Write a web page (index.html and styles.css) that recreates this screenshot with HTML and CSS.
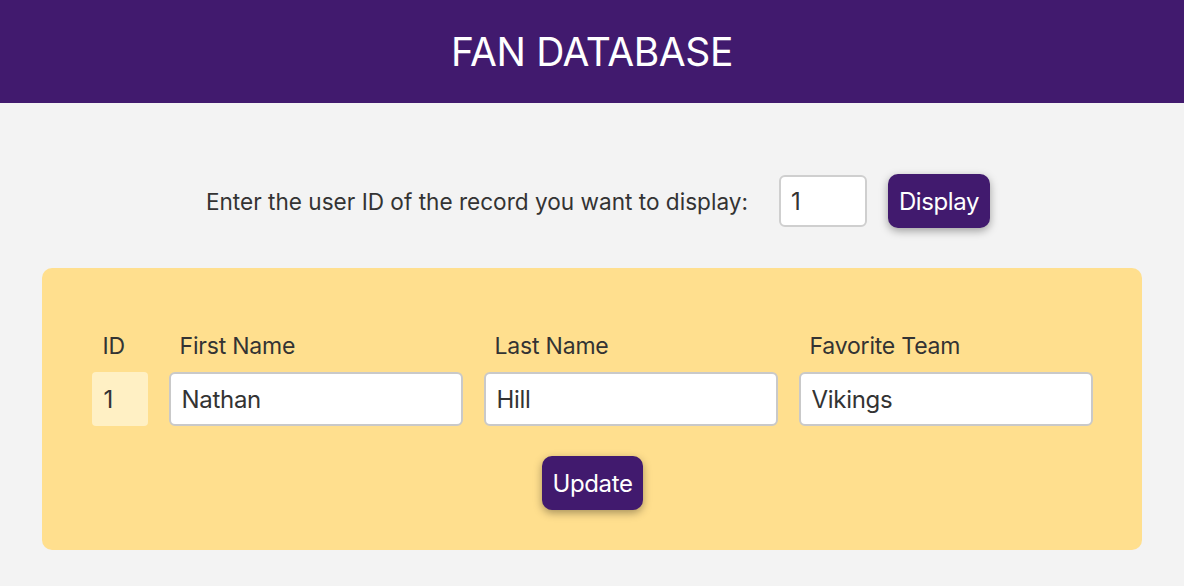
FILE: index.html
```html
<!DOCTYPE html>
<html>
<head>
<meta charset="utf-8">
<link rel="stylesheet" href="styles.css">
</head>
<body>
<header class="top">
  <h1 class="title">FAN DATABASE</h1>
</header>
<main class="main">
  <div class="lookup">
    <label class="lookup-label" for="uid">Enter the user ID of the record you want to display:</label>
    <input id="uid" class="lookup-input" type="text" value="1">
    <button class="btn">Display</button>
  </div>
  <section class="panel">
    <div class="grid">
      <div class="lbl">ID</div>
      <div class="lbl">First Name</div>
      <div class="lbl">Last Name</div>
      <div class="lbl">Favorite Team</div>
      <div class="idbox">1</div>
      <input class="field" type="text" value="Nathan">
      <input class="field" type="text" value="Hill">
      <input class="field" type="text" value="Vikings">
    </div>
    <div class="actions">
      <button class="btn">Update</button>
    </div>
  </section>
</main>
</body>
</html>
```

FILE: styles.css
```css
* { box-sizing: border-box; }
html, body { margin: 0; padding: 0; }
body {
  background: #f3f3f3;
  font-family: Inter, "Noto Sans", sans-serif;
  color: #333;
}
.top {
  background: #411a6e;
  height: 103px;
  display: flex;
  align-items: center;
  justify-content: center;
}
.title {
  margin: 0;
  color: #fff;
  font-weight: 400;
  font-size: 39px;
  letter-spacing: -0.4px;
}
.main {
  padding: 71px 42px 0;
}
.lookup {
  display: flex;
  align-items: center;
  justify-content: center;
  padding-left: 12px;
}
.lookup-label {
  font-size: 22.6px;
  letter-spacing: 0;
  color: #333;
  margin-right: 31px;
}
.lookup-input {
  width: 88px;
  height: 52px;
  border: 2px solid #cfcfcf;
  border-radius: 6px;
  background: #fff;
  font-family: inherit;
  font-size: 24px;
  color: #333;
  padding: 0 10px;
  margin-right: 21px;
}
.btn {
  background: #411a6e;
  color: #fff;
  border: none;
  border-radius: 10px;
  height: 54px;
  padding: 0 11px;
  font-family: inherit;
  font-size: 24px;
  letter-spacing: -0.4px;
  box-shadow: 0 3px 8px rgba(0,0,0,0.35);
}
.panel {
  margin-top: 40px;
  background: #ffdf8e;
  border-radius: 10px;
  height: 282px;
  padding-top: 64px;
}
.grid {
  display: grid;
  grid-template-columns: 56px 294px 294px 294px;
  column-gap: 21px;
  row-gap: 12px;
  justify-content: center;
  align-items: center;
}
.lbl {
  font-size: 23px;
  letter-spacing: -0.2px;
  padding-left: 11px;
  line-height: 28px;
  color: #333;
}
.idbox {
  height: 54px;
  background: #fff0c4;
  border-radius: 4px;
  font-size: 24px;
  display: flex;
  align-items: center;
  padding-left: 12px;
  color: #333;
}
.field {
  height: 54px;
  border: 2px solid #c9c9c9;
  border-radius: 6px;
  background: #fff;
  font-family: inherit;
  font-size: 24px;
  letter-spacing: -0.3px;
  color: #333;
  padding: 0 11px;
  width: 100%;
}
.actions {
  display: flex;
  justify-content: center;
  margin-top: 30px;
}
.actions .btn { margin-left: 1px; }
```
